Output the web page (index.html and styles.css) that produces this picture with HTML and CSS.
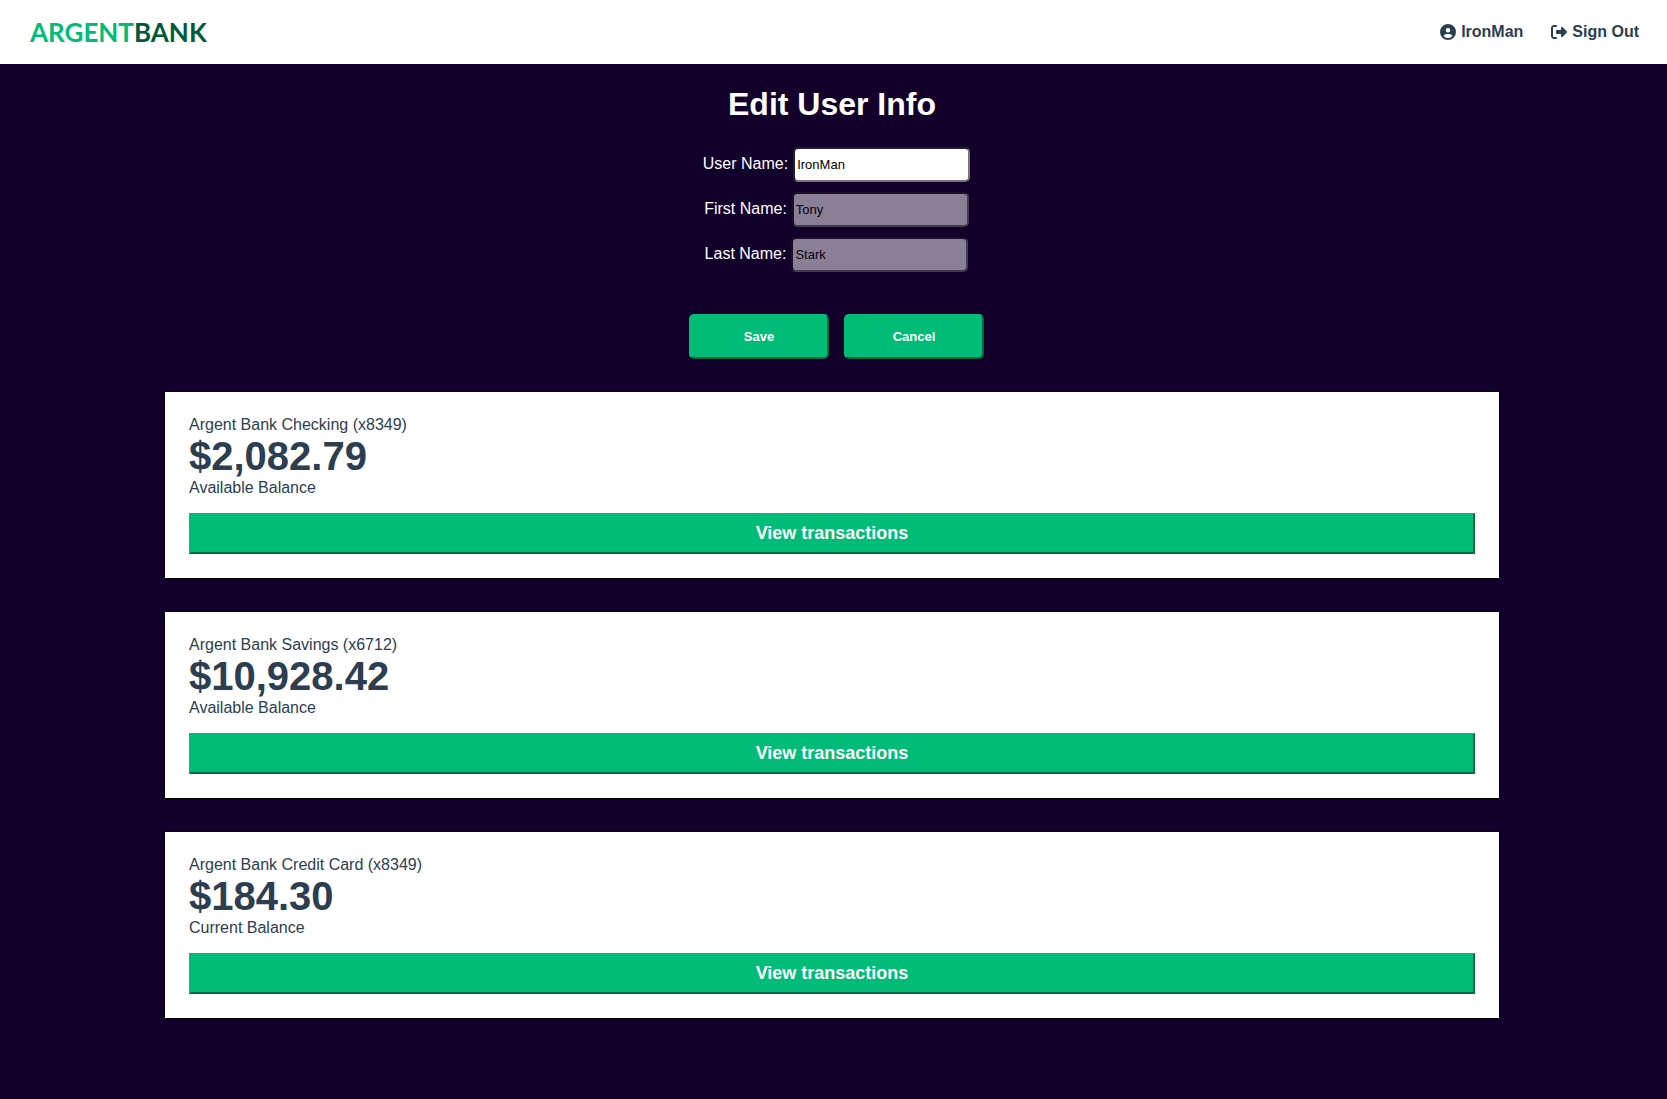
FILE: index.html
```html
<!DOCTYPE html>
<html lang="en">
<head>
    <meta charset="utf-8">
    <title>Argent Bank - User</title>
    <meta name="viewport" content="width=device-width, initial-scale=1">
    <link rel="stylesheet" href="styles.css">
</head>
<body>
    <nav class="main-nav">
        <a class="main-nav-logo" href="#">ARGENT<span class="logo-dark">BANK</span></a>
        <div class="main-nav-links">
            <a class="main-nav-item" href="#">
                <svg class="icon" viewBox="0 0 512 512" aria-hidden="true"><path fill="currentColor" d="M399 384.2C376.9 345.8 335.400 320 288 320H224c-47.400 0-88.900 25.800-111 64.200c35.200 39.200 86.200 63.800 143 63.800s107.800-24.700 143-63.800zM0 256a256 256 0 1 1 512 0A256 256 0 1 1 0 256zm256 16a72 72 0 1 0 0-144 72 72 0 1 0 0 144z"/></svg>
                IronMan
            </a>
            <a class="main-nav-item" href="#">
                <svg class="icon" viewBox="0 0 512 512" aria-hidden="true"><path fill="currentColor" d="M502.600 278.600c12.500-12.500 12.500-32.800 0-45.300l-128-128c-9.200-9.200-22.900-11.900-34.900-6.900s-19.800 16.600-19.800 29.600l0 64-128 0c-17.700 0-32 14.300-32 32l0 64c0 17.700 14.300 32 32 32l128 0 0 64c0 12.900 7.800 24.600 19.800 29.600s25.700 2.200 34.900-6.900l128-128zM160 96c17.700 0 32-14.300 32-32s-14.300-32-32-32L96 32C43 32 0 75 0 128L0 384c0 53 43 96 96 96l64 0c17.700 0 32-14.300 32-32s-14.300-32-32-32l-64 0c-17.700 0-32-14.300-32-32l0-256c0-17.700 14.300-32 32-32l64 0z"/></svg>
                Sign Out
            </a>
        </div>
    </nav>
    <main class="main">
        <h1 class="title">Edit User Info</h1>
        <form class="edit-form">
            <div class="edit-row">
                <label for="username">User Name:</label>
                <input type="text" id="username" value="IronMan">
            </div>
            <div class="edit-row">
                <label for="firstname">First Name:</label>
                <input type="text" id="firstname" value="Tony" disabled>
            </div>
            <div class="edit-row">
                <label for="lastname">Last Name:</label>
                <input type="text" id="lastname" value="Stark" disabled>
            </div>
            <div class="edit-buttons">
                <button type="button" class="edit-button">Save</button>
                <button type="button" class="edit-button">Cancel</button>
            </div>
        </form>
        <section class="account">
            <h2 class="account-title">Argent Bank Checking (x8349)</h2>
            <p class="account-amount">$2,082.79</p>
            <p class="account-description">Available Balance</p>
            <button type="button" class="transaction-button">View transactions</button>
        </section>
        <section class="account">
            <h2 class="account-title">Argent Bank Savings (x6712)</h2>
            <p class="account-amount">$10,928.42</p>
            <p class="account-description">Available Balance</p>
            <button type="button" class="transaction-button">View transactions</button>
        </section>
        <section class="account">
            <h2 class="account-title">Argent Bank Credit Card (x8349)</h2>
            <p class="account-amount">$184.30</p>
            <p class="account-description">Current Balance</p>
            <button type="button" class="transaction-button">View transactions</button>
        </section>
    </main>
</body>
</html>
```

FILE: styles.css
```css
* { box-sizing: border-box; }
body {
    margin: 0;
    min-height: 100vh;
    background: #12002b;
    color: #2c3e50;
    font-family: "Liberation Sans", Arial, sans-serif;
    font-size: 16px;
    line-height: 18px;
}
h1, h2, p { margin: 0; }

/* Header */
.main-nav {
    display: flex;
    justify-content: space-between;
    align-items: center;
    height: 64px;
    padding: 0 28px 0 30px;
    background: white;
}
.main-nav a { text-decoration: none; }
.main-nav-logo {
    color: #00bc77;
    font-family: Lato, sans-serif;
    font-size: 26px;
    font-weight: bold;
    line-height: 32px;
}
.logo-dark { color: #005b38; }
.main-nav-links { display: flex; gap: 28px; }
.main-nav-item {
    display: flex;
    align-items: center;
    gap: 5px;
    color: #2c3e50;
    font-weight: bold;
}
.icon { width: 16px; height: 16px; }

/* Edit form */
.main { padding: 22px 167px 32px 164px; }
.title {
    color: white;
    font-size: 32px;
    line-height: 37px;
    text-align: center;
}
.edit-form {
    display: flex;
    flex-direction: column;
    gap: 10px;
    margin: 24px 0 32px;
    padding-left: 9px;
    color: white;
}
.edit-row {
    display: flex;
    justify-content: center;
    align-items: center;
    gap: 5px;
}
.edit-row label { padding-bottom: 2px; }
.edit-row input {
    width: 177px;
    height: 35px;
    padding: 1px 2px;
    border: 2px inset #767676;
    border-radius: 5px;
    background: white;
    color: black;
    font-family: inherit;
    font-size: 13px;
}
.edit-row input:disabled { opacity: 0.5; }
.edit-buttons {
    display: flex;
    justify-content: center;
    gap: 15px;
    margin-top: 32px;
}
.edit-button, .transaction-button {
    border: 2px outset #00bc77;
    background: #00bc77;
    color: white;
    font-family: inherit;
    font-weight: bold;
    cursor: pointer;
}
.edit-button {
    width: 140px;
    height: 45px;
    border-radius: 5px;
    font-size: 13px;
}

/* Accounts */
.account {
    display: flex;
    flex-direction: column;
    margin-bottom: 32px;
    padding: 24px;
    border: 1px solid black;
    background: white;
}
.account-title { font-size: 16px; font-weight: normal; }
.account-amount {
    font-size: 40px;
    font-weight: bold;
    line-height: 45px;
}
.transaction-button {
    height: 41px;
    margin-top: 16px;
    font-size: 18px;
}
```
